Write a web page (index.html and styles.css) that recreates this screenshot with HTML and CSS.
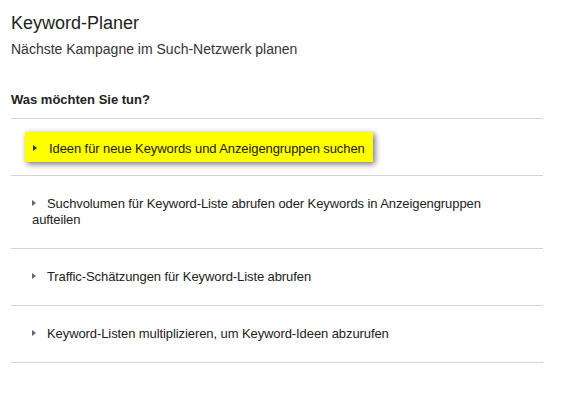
FILE: index.html
```html
<!DOCTYPE html>
<html lang="de">
<head>
<meta charset="utf-8">
<title>Keyword-Planer</title>
<link rel="stylesheet" href="styles.css">
</head>
<body>
<div class="page">
  <header class="head">
    <h1 class="title">Keyword-Planer</h1>
    <p class="subtitle">Nächste Kampagne im Such-Netzwerk planen</p>
  </header>
  <h2 class="question">Was möchten Sie tun?</h2>
  <ul class="options">
    <li class="option option-first">
      <div class="highlight"><span class="arrow"></span>Ideen für neue Keywords und Anzeigengruppen suchen</div>
    </li>
    <li class="option">
      <div class="label"><span class="arrow"></span>Suchvolumen für Keyword-Liste abrufen oder Keywords in Anzeigengruppen aufteilen</div>
    </li>
    <li class="option">
      <div class="label"><span class="arrow"></span>Traffic-Schätzungen für Keyword-Liste abrufen</div>
    </li>
    <li class="option">
      <div class="label"><span class="arrow"></span>Keyword-Listen multiplizieren, um Keyword-Ideen abzurufen</div>
    </li>
  </ul>
</div>
</body>
</html>
```
FILE: styles.css
```css
html, body {
  margin: 0;
  padding: 0;
  background: #ffffff;
}
body {
  font-family: Arial, "Liberation Sans", sans-serif;
  color: #222222;
}
.page {
  width: 532px;
  margin-left: 11px;
  padding-top: 12px;
}
.title {
  margin: 0;
  font-size: 18px;
  line-height: 22px;
  font-weight: normal;
  color: #222222;
}
.subtitle {
  margin: 7px 0 0 0;
  font-size: 14px;
  line-height: 16px;
  color: #333333;
}
.question {
  margin: 35px 0 0 0;
  padding-bottom: 10px;
  font-size: 13px;
  line-height: 16px;
  font-weight: bold;
  color: #222222;
  border-bottom: 1px solid #d3d3d3;
}
.options {
  list-style: none;
  margin: 0;
  padding: 0;
}
.option {
  border-bottom: 1px solid #d3d3d3;
  padding: 20px 21px 20px 21px;
  font-size: 13px;
  line-height: 16px;
  letter-spacing: -0.09px;
  color: #222222;
}
.option-first {
  padding: 13px 0 13px 14px;
  display: flex;
}
.highlight {
  background: #ffff00;
  padding: 9px 8px 5px 8px;
  box-shadow: 2px 2px 6px rgba(0, 0, 0, 0.55);
  color: #222200;
}
.arrow {
  display: inline-block;
  width: 15px;
  height: 8px;
  position: relative;
}
.arrow::before {
  content: "";
  position: absolute;
  left: 0;
  top: 0;
  border-style: solid;
  border-width: 3.5px 0 3.5px 4px;
  border-color: transparent transparent transparent #666666;
}
.highlight .arrow {
  width: 16px;
}
.highlight .arrow::before {
  border-left-color: #333300;
}
```
